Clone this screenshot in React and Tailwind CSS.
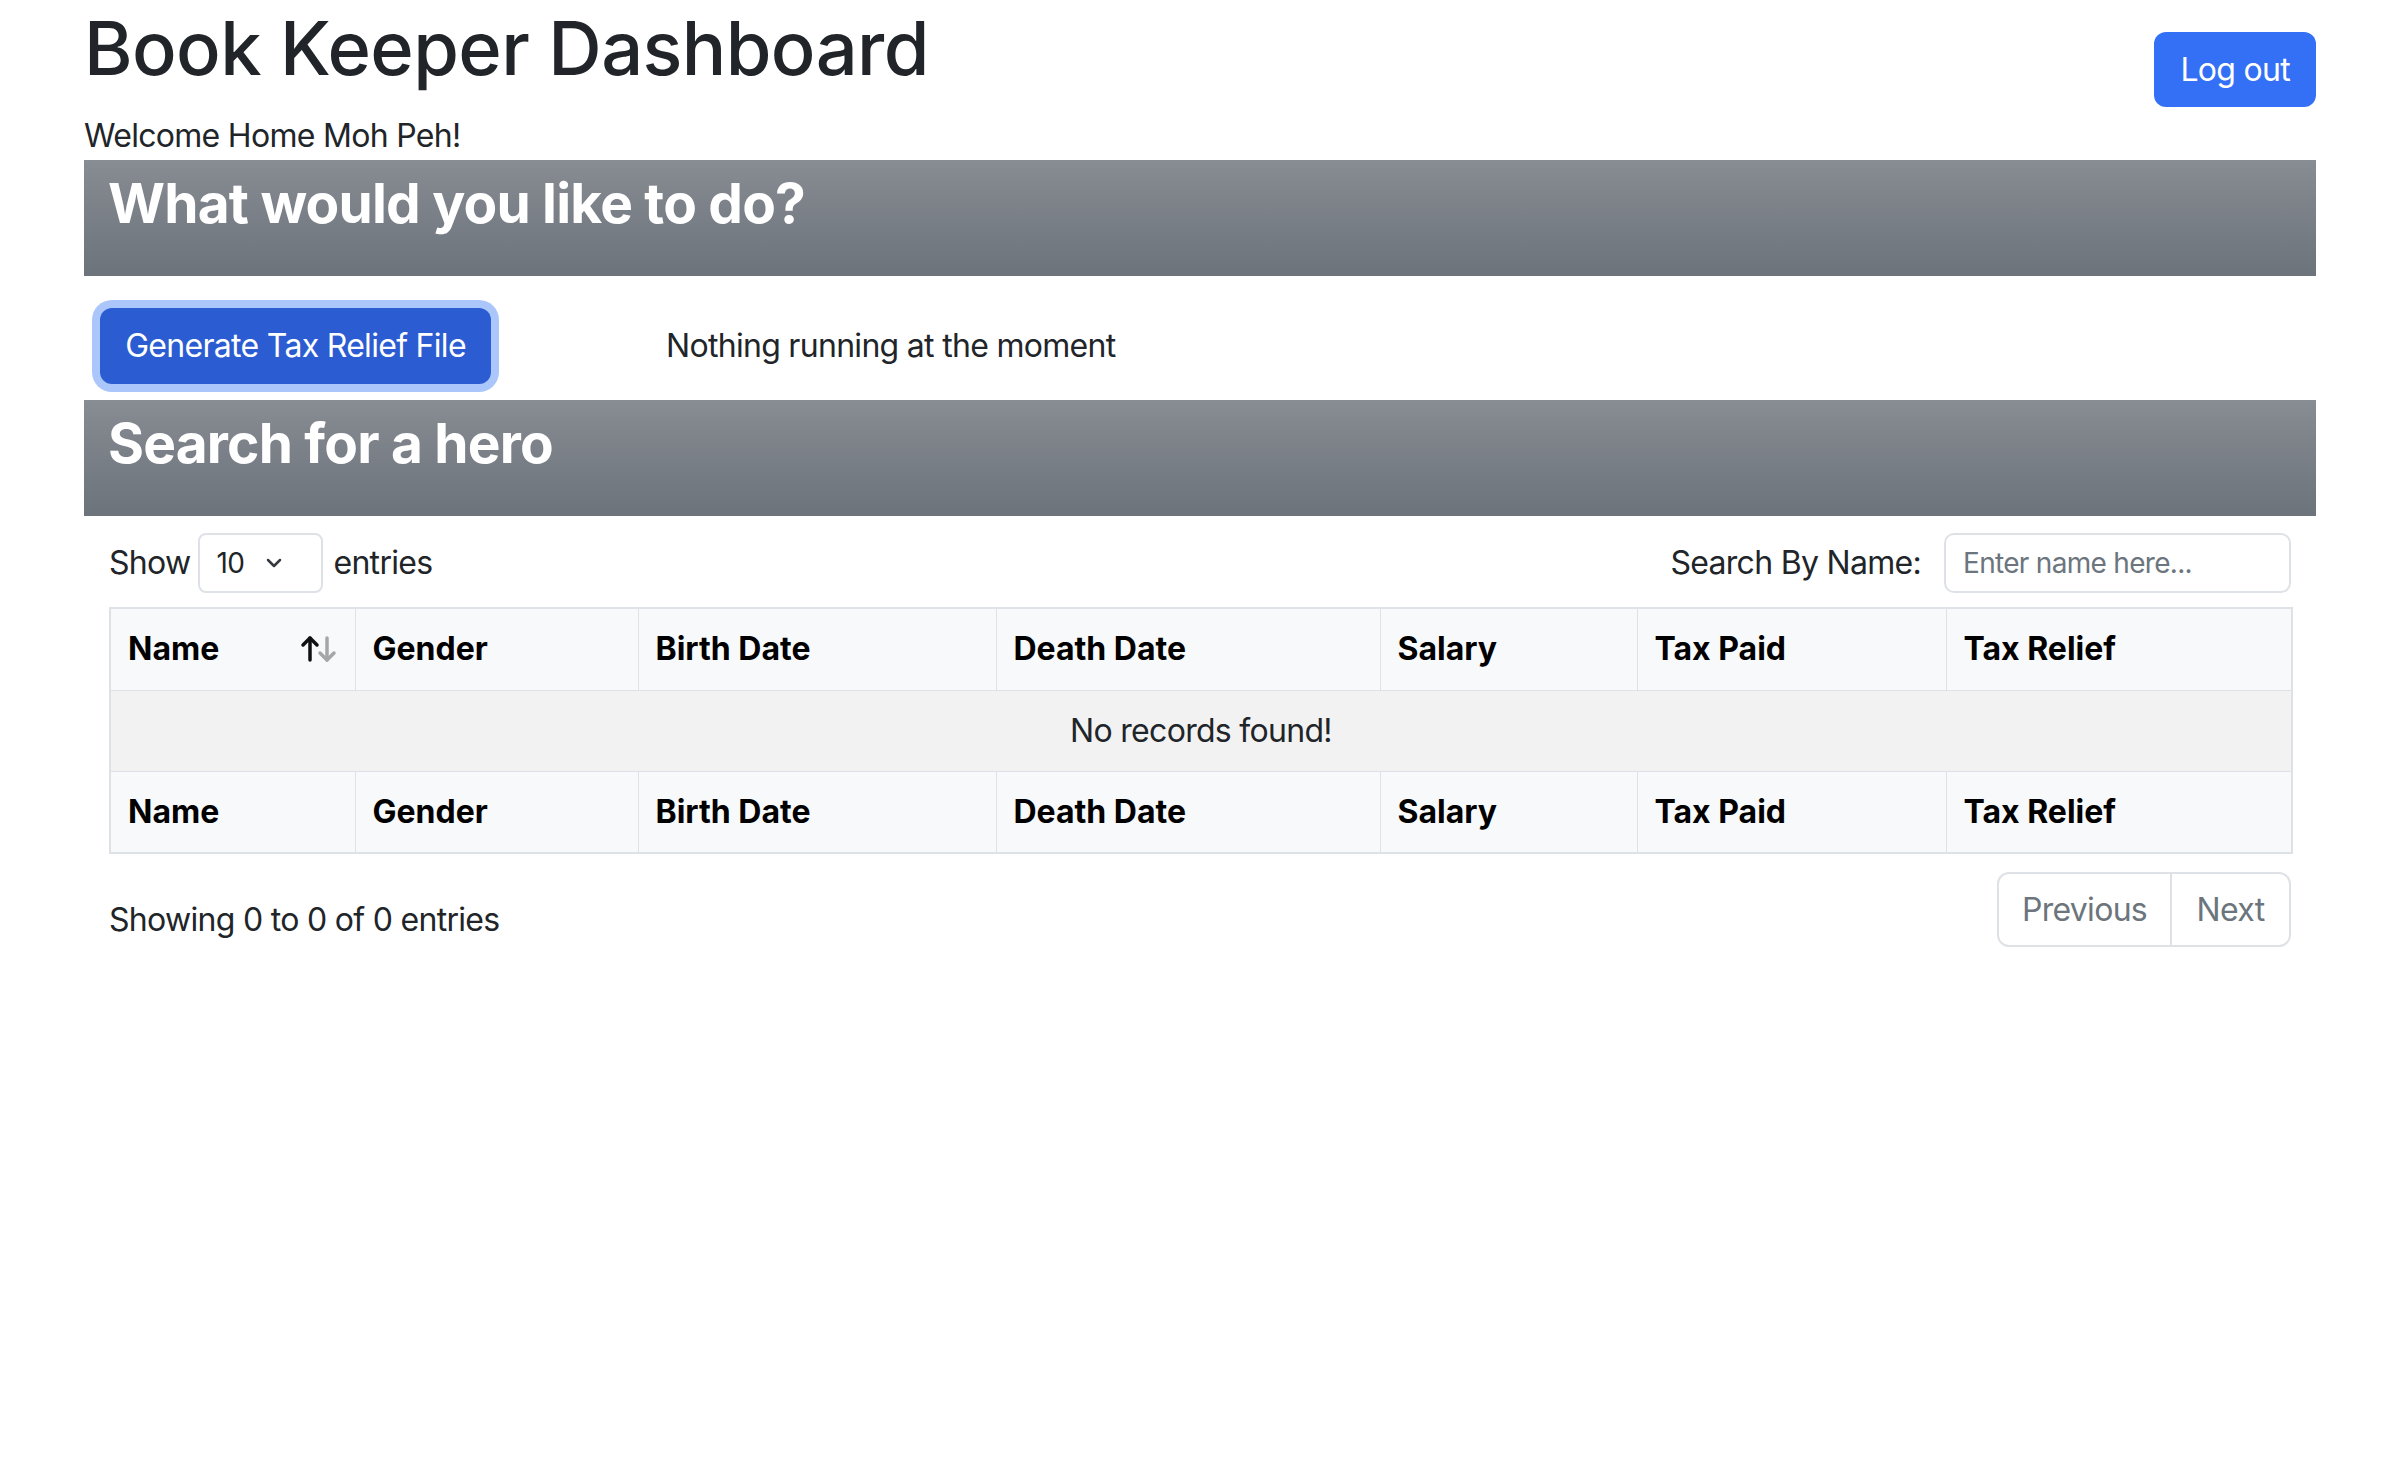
import React from 'react'

const columns = [
  { label: 'Name', width: 'w-[245px]', sort: true },
  { label: 'Gender', width: 'w-[283px]' },
  { label: 'Birth Date', width: 'w-[358px]' },
  { label: 'Death Date', width: 'w-[384px]' },
  { label: 'Salary', width: 'w-[257px]' },
  { label: 'Tax Paid', width: 'w-[309px]' },
  { label: 'Tax Relief', width: 'w-[346px]' },
]

const SortIcon = () => (
  <svg width="38" height="28" viewBox="0 0 38 28" fill="none" strokeWidth="3.5" strokeLinecap="round" strokeLinejoin="round">
    <g stroke="#111">
      <path d="M10 25V3" />
      <path d="M3 10l7-7 7 7" />
    </g>
    <g stroke="#a6a6a6">
      <path d="M27 3v22" />
      <path d="M20 18l7 7 7-7" />
    </g>
  </svg>
)

const Chevron = () => (
  <svg width="18" height="12" viewBox="0 0 18 12" fill="none" stroke="#343a40" strokeWidth="2.5" strokeLinecap="round" strokeLinejoin="round">
    <path d="M3 3l6 6 6-6" />
  </svg>
)

const Band = ({ children }) => (
  <div className="h-[116px] px-[24px] pt-[10px] bg-gradient-to-b from-[#888c93] to-[#6c737b]">
    <h2 className="text-[55px] leading-[1.2] font-bold tracking-[-0.8px] text-white">{children}</h2>
  </div>
)

const HeaderRow = ({ withSort }) => (
  <tr className="bg-[#f8f9fa]">
    {columns.map((c) => (
      <th
        key={c.label}
        className={`${c.width} h-[82px] border border-[#dee2e6] px-[17px] text-left font-bold tracking-normal text-black`}
      >
        <div className="flex items-center justify-between">
          <span>{c.label}</span>
          {withSort && c.sort && <SortIcon />}
        </div>
      </th>
    ))}
  </tr>
)

export default function App() {
  return (
    <div className="min-h-[1472px] w-full bg-white text-[32px] leading-[1.5] tracking-[-0.7px] text-[#212529] font-['Inter',sans-serif]">
      <div className="mx-auto w-[2232px]">
        {/* Header */}
        <div className="flex items-start justify-between">
          <h1 className="text-[74px] leading-[96px] font-medium tracking-[-0.6px] mb-[16px]">Book Keeper Dashboard</h1>
          <button
            type="button"
            className="mt-[32px] h-[75px] px-[26px] rounded-[12px] bg-[#3470f6] text-white text-[32px]"
          >
            Log out
          </button>
        </div>
        <p>Welcome Home Moh Peh!</p>

        <Band>What would you like to do?</Band>

        {/* Actions */}
        <div className="flex items-center pt-[32px] pb-[16px]">
          <button
            type="button"
            className="ml-[16px] h-[76px] w-[391px] rounded-[12px] bg-[#2b5cd1] text-white text-[32px] ring-[8px] ring-[#aac6fa]"
          >
            Generate Tax Relief File
          </button>
          <span className="ml-[175px]">Nothing running at the moment</span>
        </div>

        <Band>Search for a hero</Band>

        {/* Table section */}
        <div className="px-[25px] pt-[17px]">
          <div className="flex items-center justify-between">
            <div className="flex items-center">
              <span>Show</span>
              <div className="ml-[8px] mr-[10px] flex h-[60px] w-[125px] items-center justify-between rounded-[8px] border-2 border-[#dee2e6] pl-[16px] pr-[38px] text-[28px]">
                <span>10</span>
                <Chevron />
              </div>
              <span>entries</span>
            </div>
            <div className="flex items-center">
              <span>Search By Name:</span>
              <input
                type="text"
                placeholder="Enter name here..."
                className="ml-[23px] h-[60px] w-[347px] rounded-[10px] border-2 border-[#dee2e6] px-[17px] text-[28px] placeholder:text-[#6c757d] outline-none"
              />
            </div>
          </div>

          <table className="mt-[14px] w-[2182px] table-fixed border-collapse border-2 border-[#dee2e6]">
            <thead>
              <HeaderRow withSort />
            </thead>
            <tbody>
              <tr className="bg-[#f2f2f2]">
                <td colSpan={7} className="h-[81px] border border-[#dee2e6] text-center">
                  No records found!
                </td>
              </tr>
            </tbody>
            <tfoot>
              <HeaderRow />
            </tfoot>
          </table>

          <div className="mt-[18px] flex items-start justify-between">
            <div className="mt-[24px]">Showing 0 to 0 of 0 entries</div>
            <div className="flex h-[75px] rounded-[12px] border-2 border-[#dee2e6] text-[#6c757d]">
              <span className="flex w-[173px] items-center justify-center border-r-2 border-[#dee2e6]">Previous</span>
              <span className="flex w-[117px] items-center justify-center">Next</span>
            </div>
          </div>
        </div>
      </div>
    </div>
  )
}
